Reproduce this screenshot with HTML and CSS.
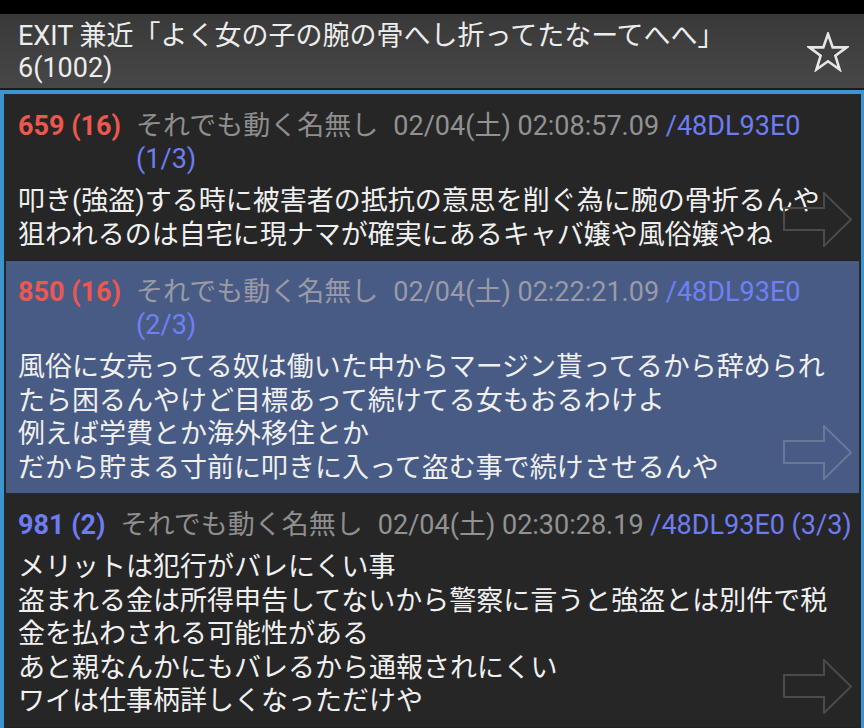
FILE: index.html
```html
<!DOCTYPE html>
<html lang="ja">
<head>
<meta charset="utf-8">
<title>EXIT 兼近</title>
<link rel="stylesheet" href="styles.css">
</head>
<body>
<div class="app">
  <div class="statusbar"></div>
  <header class="titlebar">
    <div class="title">EXIT 兼近「よく女の子の腕の骨へし折ってたなーてへへ」<br>6(1002)</div>
    <svg class="star" width="42" height="40" viewBox="0 0 42 40" aria-hidden="true">
      <polygon points="21,2 25.7,15.4 39.6,15.4 28.4,23.8 32.6,37.5 21,29.3 9.4,37.5 13.6,23.8 2.4,15.4 16.3,15.4" fill="none" stroke="#e6e6e6" stroke-width="2.6" stroke-linejoin="miter"/>
    </svg>
  </header>
  <div class="divider"></div>
  <main class="thread">
    <article class="post">
      <div class="meta">
        <span class="num hot">659 (16)</span>
        <span class="info"><span class="name">それでも動く名無し</span><span class="date">02/04(土) 02:08:57.09</span> <span class="id">/48DL93E0</span> <span class="id">(1/3)</span></span>
      </div>
      <div class="body">叩き(強盗)する時に被害者の抵抗の意思を削ぐ為に腕の骨折るんや<br>狙われるのは自宅に現ナマが確実にあるキャバ嬢や風俗嬢やね</div>
      <svg class="arrow" width="70" height="55" viewBox="0 0 70 55" aria-hidden="true">
        <polygon points="1,16 41,16 41,1 68,27.5 41,54 41,38 1,38" fill="none" stroke-width="2"/>
      </svg>
    </article>
    <article class="post selected">
      <div class="meta">
        <span class="num hot">850 (16)</span>
        <span class="info"><span class="name">それでも動く名無し</span><span class="date">02/04(土) 02:22:21.09</span> <span class="id">/48DL93E0</span> <span class="id">(2/3)</span></span>
      </div>
      <div class="body">風俗に女売ってる奴は働いた中からマージン貰ってるから辞められ<br>たら困るんやけど目標あって続けてる女もおるわけよ<br>例えば学費とか海外移住とか<br>だから貯まる寸前に叩きに入って盗む事で続けさせるんや</div>
      <svg class="arrow" width="70" height="55" viewBox="0 0 70 55" aria-hidden="true">
        <polygon points="1,16 41,16 41,1 68,27.5 41,54 41,38 1,38" fill="none" stroke-width="2"/>
      </svg>
    </article>
    <article class="post">
      <div class="meta">
        <span class="num cool">981 (2)</span>
        <span class="info"><span class="name">それでも動く名無し</span><span class="date">02/04(土) 02:30:28.19</span> <span class="id">/48DL93E0</span> <span class="id">(3/3)</span></span>
      </div>
      <div class="body">メリットは犯行がバレにくい事<br>盗まれる金は所得申告してないから警察に言うと強盗とは別件で税<br>金を払わされる可能性がある<br>あと親なんかにもバレるから通報されにくい<br>ワイは仕事柄詳しくなっただけや</div>
      <svg class="arrow" width="70" height="55" viewBox="0 0 70 55" aria-hidden="true">
        <polygon points="1,16 41,16 41,1 68,27.5 41,54 41,38 1,38" fill="none" stroke-width="2"/>
      </svg>
    </article>
  </main>
</div>
</body>
</html>
```
FILE: styles.css
```css
* { box-sizing: border-box; }
html, body { margin: 0; padding: 0; background: #262626; }
body {
  width: 864px;
  height: 728px;
  overflow: hidden;
  font-family: Roboto, "Noto Sans CJK JP", sans-serif;
  color: #efefef;
}
.app { display: flex; flex-direction: column; width: 864px; height: 728px; }
.statusbar { height: 14px; background: #000; flex: none; }
.titlebar {
  height: 74px;
  flex: none;
  display: flex;
  align-items: center;
  justify-content: space-between;
  padding: 0 15px 0 18px;
  background: linear-gradient(#393939, #474747);
}
.title {
  font-size: 27px;
  line-height: 32px;
  color: #ececec;
  margin-top: 2px;
}
.star { flex: none; margin-top: 2px; }
.divider { height: 2px; background: #1b1b1b; flex: none; }
.thread {
  flex: 1;
  border: 4px solid #3c95d1;
  border-bottom: none;
  border-right-width: 3px;
  background: #262626;
  padding: 0 2px;
  overflow: hidden;
}
.post {
  position: relative;
  padding: 15px 4px 8px 12px;
  background: #262626;
  border-bottom: 1px solid #202020;
}
.post:first-child { padding-top: 16px; }
.post.selected { background: #485b85; border-bottom-color: #1f2a3c; }
.meta {
  display: flex;
  align-items: flex-start;
  font-size: 27px;
  line-height: 33px;
}
.num { flex: none; font-weight: 700; margin-right: 15px; white-space: nowrap; }
.num.hot { color: #ec5750; }
.num.cool { color: #6d7cf2; }
.info { flex: 1; min-width: 0; }
.name { color: #8e8e8e; margin-right: 15px; }
.date { color: #929292; }
.selected .name, .selected .date { color: #9a9aa6; }
.id { color: #6d7cf2; }
.selected .id { color: #6f80f4; }
.body {
  margin-top: 9px;
  font-size: 27px;
  line-height: 33.5px;
  color: #f0f0f0;
}
.arrow {
  position: absolute;
  right: 6px;
  bottom: 13px;
  stroke: #4b4b4b;
}
.selected .arrow { stroke: #6a7898; }
```
